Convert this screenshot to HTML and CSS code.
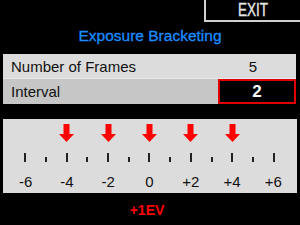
FILE: index.html
```html
<!DOCTYPE html>
<html lang="en">
<head>
  <meta charset="UTF-8" />
  <title>Exposure Bracketing</title>
  <link rel="stylesheet" href="styles.css">
</head>
<body>
  <div class="screen">
    <div class="topbar">
      <div class="exit"><span>EXIT</span></div>
    </div>
    <h1>Exposure Bracketing</h1>
    <div class="settings">
      <div class="row">
        <span class="label">Number of Frames</span>
        <span class="value">5</span>
      </div>
      <div class="row selected">
        <span class="label">Interval</span>
        <span class="value">2</span>
      </div>
    </div>
    <div class="scale">
      <div class="arrows">
        <span></span><span></span>
        <span class="arrow"><svg width="15" height="18" viewBox="0 0 15 18"><rect x="4.5" y="0" width="6" height="11" fill="#f00"/><polygon points="0,10 15,10 7.5,18" fill="#f00"/></svg></span>
        <span></span>
        <span class="arrow"><svg width="15" height="18" viewBox="0 0 15 18"><rect x="4.5" y="0" width="6" height="11" fill="#f00"/><polygon points="0,10 15,10 7.5,18" fill="#f00"/></svg></span>
        <span></span>
        <span class="arrow"><svg width="15" height="18" viewBox="0 0 15 18"><rect x="4.5" y="0" width="6" height="11" fill="#f00"/><polygon points="0,10 15,10 7.5,18" fill="#f00"/></svg></span>
        <span></span>
        <span class="arrow"><svg width="15" height="18" viewBox="0 0 15 18"><rect x="4.5" y="0" width="6" height="11" fill="#f00"/><polygon points="0,10 15,10 7.5,18" fill="#f00"/></svg></span>
        <span></span>
        <span class="arrow"><svg width="15" height="18" viewBox="0 0 15 18"><rect x="4.5" y="0" width="6" height="11" fill="#f00"/><polygon points="0,10 15,10 7.5,18" fill="#f00"/></svg></span>
        <span></span><span></span>
      </div>
      <div class="ticks">
        <span class="major"></span><span class="minor"></span>
        <span class="major"></span><span class="minor"></span>
        <span class="major"></span><span class="minor"></span>
        <span class="major"></span><span class="minor"></span>
        <span class="major"></span><span class="minor"></span>
        <span class="major"></span><span class="minor"></span>
        <span class="major"></span>
      </div>
      <div class="labels">
        <span>-6</span><span>-4</span><span>-2</span><span>0</span><span>+2</span><span>+4</span><span>+6</span>
      </div>
    </div>
    <div class="ev">+1EV</div>
  </div>
</body>
</html>
```

FILE: styles.css
```css
body {
  margin: 0;
  background: #000000;
  font-family: "Liberation Sans", Arial, sans-serif;
  color: #111111;
}

.screen {
  width: 300px;
  height: 225px;
  overflow: hidden;
}

.topbar {
  display: flex;
  justify-content: flex-end;
}

.exit {
  width: 94px;
  height: 20px;
  border-left: 2px solid #d0d0d0;
  border-bottom: 2px solid #d0d0d0;
  display: flex;
  justify-content: center;
  align-items: center;
}

.exit span {
  color: #e6e6e6;
  font-size: 18px;
  line-height: 20px;
  transform: scaleX(0.75);
  -webkit-text-stroke: 0.4px #e6e6e6;
}

h1 {
  margin: 5px 0 0;
  height: 27px;
  font-size: 15.5px;
  font-weight: normal;
  line-height: 18px;
  text-align: center;
  color: #1a8cff;
  -webkit-text-stroke: 0.3px #1a8cff;
}

.settings {
  margin: 0 4px 0 3px;
  background: #c8c8c8;
}

.row {
  display: flex;
  align-items: center;
  height: 24px;
  background: #dcdcdc;
  font-size: 15px;
  padding-top: 1px;
  box-sizing: border-box;
}

.row .label {
  flex: 1;
  padding-left: 8px;
}

.row .value {
  width: 78px;
  text-align: center;
  margin-right: 4px;
}

.row.selected {
  height: 26px;
  padding-top: 0;
  background: #c6c6c6;
  border-top: 1px solid #e8e8e8;
}

.row.selected .value {
  align-self: stretch;
  display: flex;
  align-items: center;
  justify-content: center;
  width: 74px;
  margin-right: 0;
  background: #000000;
  border: 2px solid #e00000;
  color: #ffffff;
  font-weight: bold;
  font-size: 17px;
}

.scale {
  margin: 15px 3px 0 3px;
  height: 74px;
  background: #dcdcdc;
  padding: 0 13px 0 12px;
  box-sizing: border-box;
}

.arrows,
.ticks {
  display: grid;
  grid-template-columns: repeat(13, 1fr);
}

.arrows {
  height: 18px;
  padding-top: 5px;
}

.arrows span {
  display: flex;
  justify-content: center;
}

.ticks {
  height: 9px;
  margin-top: 11px;
  align-items: end;
}

.ticks span {
  justify-self: center;
  width: 2px;
  background: #222222;
}

.ticks .major {
  height: 9px;
}

.ticks .minor {
  height: 5px;
}

.labels {
  display: grid;
  grid-template-columns: repeat(7, 1fr);
  margin: 11px -10px 0;
  font-size: 15px;
  line-height: 18px;
  text-align: center;
}

.ev {
  margin-top: 9px;
  text-align: center;
  color: #ff0000;
  font-weight: bold;
  font-size: 14px;
  padding-right: 6px;
}
```
